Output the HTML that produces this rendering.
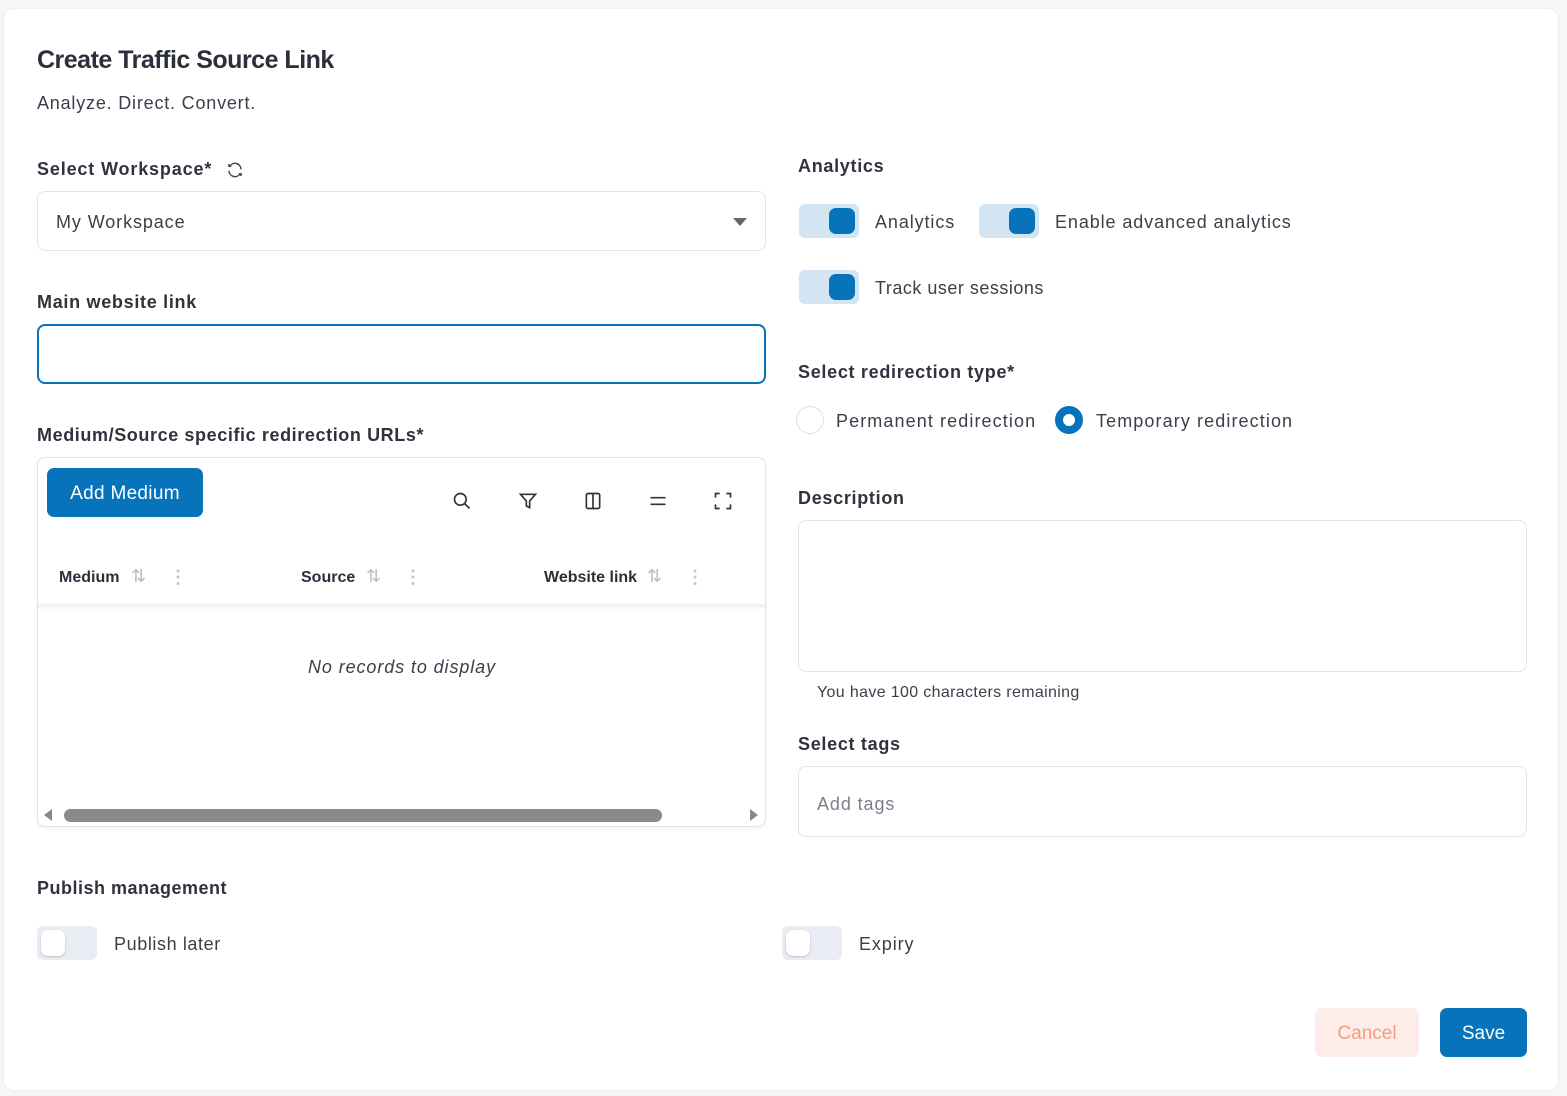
<!DOCTYPE html>
<html><head><meta charset="utf-8"><style>
*{box-sizing:border-box;margin:0;padding:0}
body{width:1567px;height:1096px;background:#f6f7f9;font-family:"Liberation Sans",sans-serif;color:#2b2f3a;position:relative;overflow:hidden}
.card{position:absolute;left:4px;top:9px;width:1554px;height:1081px;background:#fff;border-radius:10px;box-shadow:0 0 3px rgba(0,0,0,.08)}
.a{position:absolute;white-space:nowrap}
.lbl{font-size:18px;font-weight:bold;color:#2f333d;letter-spacing:0.7px}
.txt{font-size:18px;color:#3a3f4b;letter-spacing:0.9px}
.box{position:absolute;border:1px solid #e2e4ea;border-radius:8px;background:#fff}
.tog{position:absolute;width:60px;height:34px;border-radius:6px;background:#d3e4f3}
.tog i{position:absolute;right:4px;top:4px;width:26px;height:26px;border-radius:7px;background:#0773bb}
.togoff{position:absolute;width:60px;height:34px;border-radius:6px;background:#e9edf3}
.togoff i{position:absolute;left:4px;top:4px;width:24px;height:26px;border-radius:7px;background:#fff;box-shadow:0 1px 2px rgba(0,0,0,.2)}
.th{font-size:16px;font-weight:bold;color:#2b2f3a}
.sort{color:#b8bcc4;font-size:18px}
.dots{color:#c0c4cc;font-size:18px;font-weight:bold}
</style></head><body>
<div class="card"></div>
<div class="a" style="left:37px;top:46px;font-size:25px;font-weight:bold;color:#2b2f3a;letter-spacing:-0.5px">Create Traffic Source Link</div>
<div class="a txt" style="left:37px;top:93px;letter-spacing:0.8px">Analyze. Direct. Convert.</div>

<div class="a lbl" style="left:37px;top:159px;letter-spacing:0.85px">Select Workspace*</div>
<svg class="a" style="left:226px;top:161px" width="18" height="18" viewBox="0 0 24 24" fill="none" stroke="#444" stroke-width="2"><path d="M20 11a8 8 0 0 0-14.5-4.5M4 4v3h3M4 13a8 8 0 0 0 14.5 4.5M20 20v-3h-3"/></svg>
<div class="box" style="left:37px;top:191px;width:729px;height:60px"></div>
<div class="a txt" style="left:56px;top:212px">My Workspace</div>
<div class="a" style="left:733px;top:218px;width:0;height:0;border-left:7px solid transparent;border-right:7px solid transparent;border-top:8px solid #666"></div>

<div class="a lbl" style="left:37px;top:292px">Main website link</div>
<div class="a" style="left:37px;top:324px;width:729px;height:60px;border:2px solid #0773bb;border-radius:8px"></div>

<div class="a lbl" style="left:37px;top:425px;letter-spacing:0.6px">Medium/Source specific redirection URLs*</div>
<div class="box" style="left:37px;top:457px;width:729px;height:370px;box-shadow:0 1px 3px rgba(0,0,0,.06)"></div>
<div class="a" style="left:47px;top:468px;width:156px;height:49px;background:#0773bb;border-radius:7px;color:#fff;font-size:19px;text-align:center;line-height:51px;letter-spacing:0.3px">Add Medium</div>
<svg class="a" style="left:452px;top:491px" width="20" height="20" viewBox="0 0 24 24" fill="none" stroke="#333" stroke-width="2"><circle cx="10" cy="10" r="7"/><path d="M15 15l6 6"/></svg>
<svg class="a" style="left:518px;top:491px" width="20" height="20" viewBox="0 0 24 24" fill="none" stroke="#333" stroke-width="2"><path d="M3 4h18l-7 8v8l-4-2v-6z"/></svg>
<svg class="a" style="left:583px;top:491px" width="20" height="20" viewBox="0 0 24 24" fill="none" stroke="#333" stroke-width="2"><rect x="4" y="3" width="16" height="18" rx="2"/><path d="M12 3v18"/></svg>
<svg class="a" style="left:648px;top:491px" width="20" height="20" viewBox="0 0 24 24" fill="none" stroke="#333" stroke-width="2"><path d="M3 8h18M3 16h18"/></svg>
<svg class="a" style="left:713px;top:491px" width="20" height="20" viewBox="0 0 24 24" fill="none" stroke="#333" stroke-width="2"><path d="M3 8V3h5M16 3h5v5M21 16v5h-5M8 21H3v-5"/></svg>
<div class="a th" style="left:59px;top:569px">Medium</div><div class="a sort" style="left:131px;top:566px">⇅</div><div class="a dots" style="left:169px;top:567px">⋮</div>
<div class="a th" style="left:301px;top:569px">Source</div><div class="a sort" style="left:366px;top:566px">⇅</div><div class="a dots" style="left:404px;top:567px">⋮</div>
<div class="a th" style="left:544px;top:569px">Website link</div><div class="a sort" style="left:647px;top:566px">⇅</div><div class="a dots" style="left:686px;top:567px">⋮</div>
<div class="a" style="left:38px;top:604px;width:727px;height:6px;background:linear-gradient(#eceef2,#fff)"></div>
<div class="a" style="left:308px;top:657px;font-size:18px;font-style:italic;color:#3a3f4b;letter-spacing:0.9px">No records to display</div>
<div class="a" style="left:44px;top:809px;width:0;height:0;border-top:6px solid transparent;border-bottom:6px solid transparent;border-right:8px solid #888"></div>
<div class="a" style="left:64px;top:809px;width:598px;height:13px;background:#8a8a8a;border-radius:7px"></div>
<div class="a" style="left:750px;top:809px;width:0;height:0;border-top:6px solid transparent;border-bottom:6px solid transparent;border-left:8px solid #888"></div>

<div class="a lbl" style="left:798px;top:156px">Analytics</div>
<div class="tog" style="left:799px;top:204px"><i></i></div><div class="a txt" style="left:875px;top:212px">Analytics</div>
<div class="tog" style="left:979px;top:204px"><i></i></div><div class="a txt" style="left:1055px;top:212px">Enable advanced analytics</div>
<div class="tog" style="left:799px;top:270px"><i></i></div><div class="a txt" style="left:875px;top:278px;letter-spacing:0.5px">Track user sessions</div>

<div class="a lbl" style="left:798px;top:362px">Select redirection type*</div>
<div class="a" style="left:796px;top:406px;width:28px;height:28px;border-radius:50%;border:1px solid #dcdfe5"></div>
<div class="a txt" style="left:836px;top:411px;letter-spacing:1.1px">Permanent redirection</div>
<div class="a" style="left:1055px;top:406px;width:28px;height:28px;border-radius:50%;border:8px solid #0773bb;background:#fff"></div>
<div class="a txt" style="left:1096px;top:411px;letter-spacing:1.1px">Temporary redirection</div>

<div class="a lbl" style="left:798px;top:488px">Description</div>
<div class="box" style="left:798px;top:520px;width:729px;height:152px"></div>
<div class="a" style="left:817px;top:684px;font-size:16px;color:#3a3f4b;letter-spacing:0.35px">You have 100 characters remaining</div>

<div class="a lbl" style="left:798px;top:734px">Select tags</div>
<div class="box" style="left:798px;top:766px;width:729px;height:71px"></div>
<div class="a" style="left:817px;top:794px;font-size:18px;color:#7a7f8a;letter-spacing:0.9px">Add tags</div>

<div class="a lbl" style="left:37px;top:878px;letter-spacing:0.5px">Publish management</div>
<div class="togoff" style="left:37px;top:926px"><i></i></div><div class="a txt" style="left:114px;top:934px;letter-spacing:0.6px">Publish later</div>
<div class="togoff" style="left:782px;top:926px"><i></i></div><div class="a txt" style="left:859px;top:934px">Expiry</div>

<div class="a" style="left:1315px;top:1008px;width:104px;height:49px;background:#fdece7;border-radius:7px;color:#f0a07e;font-size:19px;text-align:center;line-height:51px">Cancel</div>
<div class="a" style="left:1440px;top:1008px;width:87px;height:49px;background:#0773bb;border-radius:7px;color:#fff;font-size:19px;text-align:center;line-height:51px">Save</div>
</body></html>
